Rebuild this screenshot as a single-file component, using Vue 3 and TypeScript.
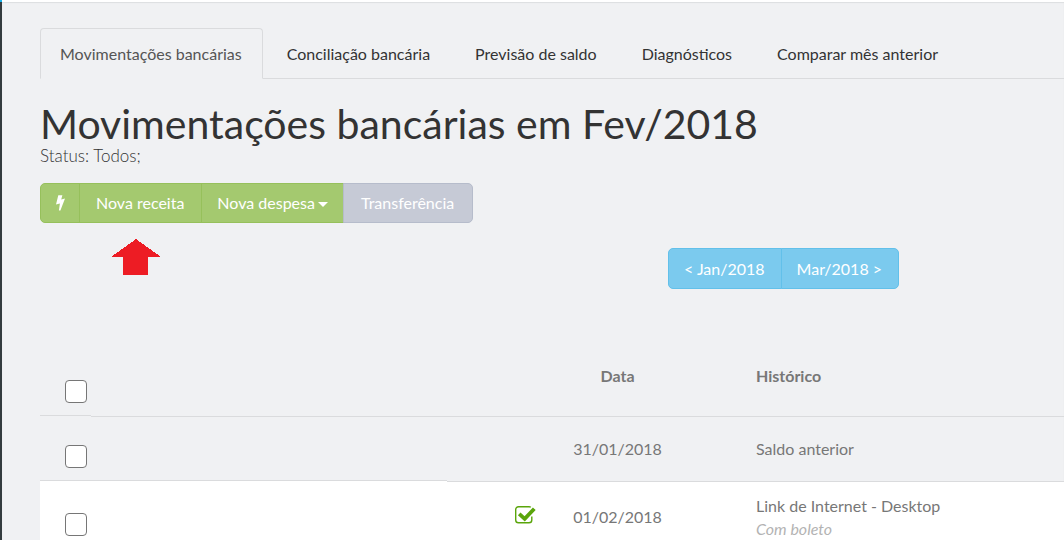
<script setup lang="ts">
import { ref } from 'vue'

interface Entry {
  id: number
  date: string
  title: string
  note?: string
  settled: boolean
}

const tabs: string[] = [
  'Movimentações bancárias',
  'Conciliação bancária',
  'Previsão de saldo',
  'Diagnósticos',
  'Comparar mês anterior',
]
const activeTab = ref(0)

const entries: Entry[] = [
  { id: 1, date: '31/01/2018', title: 'Saldo anterior', settled: false },
  { id: 2, date: '01/02/2018', title: 'Link de Internet - Desktop', note: 'Com boleto', settled: true },
]
const selected = ref<number[]>([])

function toggleAll(event: Event): void {
  const checked = (event.target as HTMLInputElement).checked
  selected.value = checked ? entries.map((entry) => entry.id) : []
}
</script>

<template>
  <div class="page">
    <div class="rail"></div>
    <main class="content">
      <nav class="tabs">
        <a
          v-for="(tab, index) in tabs"
          :key="tab"
          href="#"
          class="tab"
          :class="{ active: index === activeTab }"
          @click.prevent="activeTab = index"
          >{{ tab }}</a
        >
      </nav>

      <h1>Movimentações bancárias em Fev/2018</h1>
      <p class="status">Status: Todos;</p>

      <div class="group actions">
        <button type="button" class="btn green quick" aria-label="Lançamento rápido">
          <svg class="bolt" viewBox="0 0 9 16" aria-hidden="true">
            <path d="M2.3 0.2H6.4L5.2 4.4L9 3.6L4.4 15.6H2.9L3.9 8.6L0 9.5Z" />
          </svg>
        </button>
        <button type="button" class="btn green income">
          Nova receita
          <svg class="pointer" viewBox="0 0 50 36" aria-hidden="true" shape-rendering="crispEdges">
            <path d="M25 0L50 18H37V36H12V18H0Z" />
          </svg>
        </button>
        <button type="button" class="btn green expense">
          Nova despesa<span class="caret"></span>
        </button>
        <button type="button" class="btn gray">Transferência</button>
      </div>

      <div class="group pager">
        <button type="button" class="btn blue">&lt; Jan/2018</button>
        <button type="button" class="btn blue">Mar/2018 &gt;</button>
      </div>

      <table class="entries">
        <colgroup>
          <col class="col-check" />
          <col class="col-space" />
          <col class="col-state" />
          <col class="col-date" />
          <col />
        </colgroup>
        <thead>
          <tr class="head">
            <th class="check">
              <input type="checkbox" aria-label="Selecionar todos" @change="toggleAll" />
            </th>
            <th></th>
            <th></th>
            <th class="date">Data</th>
            <th class="title">Histórico</th>
          </tr>
        </thead>
        <tbody>
          <tr v-for="entry in entries" :key="entry.id" :class="entry.settled ? 'settled' : 'opening'">
            <td class="check">
              <input v-model="selected" type="checkbox" :value="entry.id" :aria-label="entry.title" />
            </td>
            <td></td>
            <td class="state">
              <svg v-if="entry.settled" class="tick" viewBox="0 0 21 18" aria-hidden="true">
                <path
                  d="M15.8 1.3C15.3 0.9 14.7 0.7 14 0.7H3.5A2.8 2.8 0 0 0 0.7 3.5V14A2.8 2.8 0 0 0 3.5 16.8H14A2.8 2.8 0 0 0 16.8 14V10.4"
                  fill="none"
                  stroke="#5aa50b"
                  stroke-width="1.4"
                />
                <path d="M4.2 7.9L9.7 12.9L19.3 2.8" fill="none" stroke="#5aa50b" stroke-width="3.8" />
              </svg>
            </td>
            <td class="date">{{ entry.date }}</td>
            <td class="title">
              {{ entry.title }}
              <em v-if="entry.note" class="note">{{ entry.note }}</em>
            </td>
          </tr>
        </tbody>
      </table>
    </main>
  </div>
</template>

<style>
body {
  margin: 0;
  background: #f0f1f3;
}
</style>

<style scoped>
.page {
  display: flex;
  height: 100vh;
  overflow: hidden;
  box-sizing: border-box;
  background: #f0f1f3;
  color: #333;
  font-family: Lato, 'Liberation Sans', sans-serif;
  font-size: 16px;
  line-height: 24px;
}

.rail {
  flex: 0 0 2px;
  background: #333b3e;
  border-top: 2px solid #1ab4ec;
}

.content {
  flex: 1;
  min-width: 0;
  padding: 26px 0 0 38px;
  border-top: 2px solid #fff;
  box-shadow: inset 0 1px 1px #dcdee0;
}

.tabs {
  display: flex;
  gap: 4px;
  border-bottom: 1px solid #dadbdd;
}

.tab {
  padding: 13px 20px 12px 19px;
  margin-bottom: -1px;
  border: 1px solid transparent;
  border-radius: 4px 4px 0 0;
  color: #333;
  text-decoration: none;
  white-space: nowrap;
}

.tab.active {
  color: #555;
  background: #f0f1f3;
  border-color: #dadbdd;
  border-bottom-color: #f0f1f3;
}

h1 {
  margin: 22px 0 0;
  font-size: 41px;
  font-weight: 400;
  line-height: 46px;
}

.status {
  margin: 0;
  font-size: 17px;
  font-weight: 300;
  line-height: 18px;
}

.group {
  display: flex;
  width: max-content;
}

.btn {
  box-sizing: border-box;
  height: 40px;
  margin: 0 0 0 -1px;
  padding: 0 17px 0 16px;
  border: 1px solid;
  border-radius: 0;
  color: #fff;
  font: inherit;
  cursor: pointer;
}

.btn:first-child {
  margin-left: 0;
  border-radius: 5px 0 0 5px;
}

.btn:last-child {
  border-radius: 0 5px 5px 0;
}

.green {
  background: #a4c96f;
  border-color: #96c05b;
}

.gray {
  padding: 0 18px 0 17px;
  background: #c6cad6;
  border-color: #b6bccb;
}

.blue {
  height: 41px;
  padding: 0 16px 0 15px;
  background: #7bcaee;
  border-color: #62c0ea;
}

.actions {
  margin-top: 18px;
}

.quick {
  width: 40px;
  padding: 0;
}

.bolt {
  display: block;
  width: 9px;
  height: 16px;
  margin: 0 auto;
  fill: #fff;
}

.income {
  position: relative;
}

.expense {
  padding: 0 15px;
}

.pointer {
  position: absolute;
  top: 55px;
  left: 31px;
  width: 50px;
  height: 36px;
  fill: #ed1c24;
}

.caret {
  display: inline-block;
  margin-left: 3px;
  vertical-align: middle;
  border: 5px solid transparent;
  border-top-color: #fff;
  border-bottom: 0;
}

.pager {
  margin: 25px 0 48px 628px;
}

.entries {
  width: 100%;
  table-layout: fixed;
  border-collapse: separate;
  border-spacing: 0;
  color: #777;
}

.col-check {
  width: 51px;
}

.col-space {
  width: 356px;
}

.col-state {
  width: 112px;
}

.col-date {
  width: 117px;
}

th,
td {
  padding: 0;
  text-align: left;
  vertical-align: middle;
}

th {
  padding-bottom: 2px;
}

.head {
  height: 79px;
}

.opening {
  height: 65px;
}

.settled {
  height: 71px;
  background: #fff;
}

.head .check,
.opening .check,
.opening td:nth-child(2) {
  border-bottom: 1px solid #dadbdd;
}

.opening td:nth-child(n + 2),
.settled td:nth-child(n + 3) {
  border-top: 1px solid #dadbdd;
}

.entries .check {
  padding: 0 0 12px 25px;
  vertical-align: bottom;
}

.settled .check {
  padding-bottom: 16px;
}

.check input {
  display: block;
  appearance: none;
  box-sizing: border-box;
  width: 22px;
  height: 23px;
  margin: 0;
  border: 1px solid #767676;
  border-radius: 4px;
  background: #fff;
}

.check input:checked {
  background: #7bcaee;
}

.state {
  padding: 0 0 4px 68px;
}

.tick {
  display: block;
  width: 21px;
  height: 18px;
}

.entries .date {
  text-align: center;
}

.entries .title {
  padding-left: 80px;
}

.note {
  display: block;
  color: #b3b3b3;
  line-height: 22px;
}
</style>
